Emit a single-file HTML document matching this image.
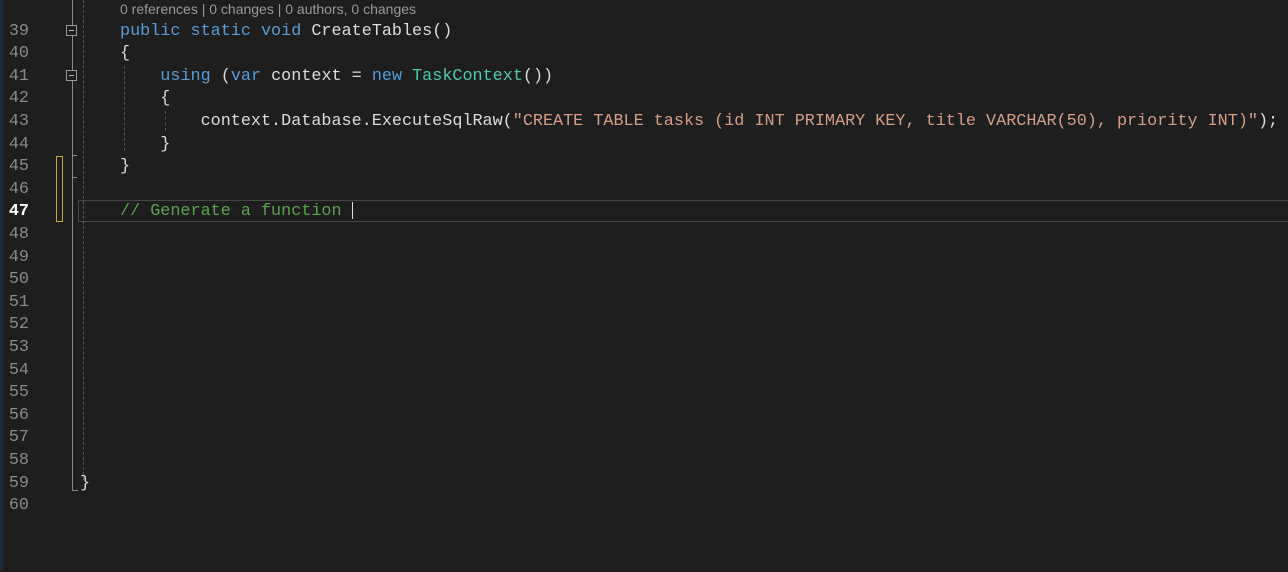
<!DOCTYPE html><html><head><style>
body{margin:0;width:1288px;height:570px;background:#1e1e1e;overflow:hidden;position:relative;font-family:"Liberation Mono",monospace;font-size:16.8px}
.w{position:absolute;left:0;top:1.5px;width:1288px;height:570px}
.ln{position:absolute;left:0;width:29px;text-align:right;color:#8a8a8a;height:22.6px;line-height:22.6px}
.c{position:absolute;left:120px;white-space:pre;color:#dcdcdc;height:22.6px;line-height:22.6px}
.k{color:#569cd6}.t{color:#4ec9b0}.s{color:#d69d85}.m{color:#57a64a}
.box{position:absolute;left:66px;width:9px;height:9px;border:1px solid #999;background:#1e1e1e}
.box:after{content:"";position:absolute;left:2px;top:4px;width:5px;height:1px;background:#bbb}
.dg{position:absolute;width:0;border-left:1px dashed #555}
</style></head><body>
<div style="position:absolute;left:0;top:0;width:3px;height:570px;background:#1b2a44"></div>
<div style="position:absolute;left:120px;top:0;font-family:'Liberation Sans',sans-serif;font-size:14px;color:#999;line-height:19px">0 references | 0 changes | 0 authors, 0 changes</div>
<div style="position:absolute;left:78px;top:200px;width:1210px;height:20px;border:1px solid #464646;border-right:none"></div>
<div style="position:absolute;left:56px;top:156px;width:5px;height:64px;border:1px solid #c8a83a"></div>
<div style="position:absolute;left:72px;top:0;width:1px;height:490px;background:#888"></div>
<div style="position:absolute;left:72px;top:490px;width:6px;height:1px;background:#888"></div>
<div style="position:absolute;left:72px;top:155px;width:5px;height:1px;background:#888"></div>
<div style="position:absolute;left:72px;top:177px;width:5px;height:1px;background:#888"></div>
<div class="dg" style="left:83px;top:0;height:480px"></div>
<div class="dg" style="left:124px;top:66px;height:85px"></div>
<div class="dg" style="left:165px;top:111px;height:20px"></div>
<div class="box" style="top:25px"></div><div class="box" style="top:70px"></div>
<div class="w">
<div class="ln" style="top:19px">39</div><div class="ln" style="top:41.6px">40</div><div class="ln" style="top:64.2px">41</div><div class="ln" style="top:86.8px">42</div><div class="ln" style="top:109.4px">43</div><div class="ln" style="top:132px">44</div><div class="ln" style="top:154.6px">45</div><div class="ln" style="top:177.2px">46</div><div class="ln" style="top:199.8px;color:#fff;font-weight:bold">47</div><div class="ln" style="top:222.4px">48</div><div class="ln" style="top:245px">49</div><div class="ln" style="top:267.6px">50</div><div class="ln" style="top:290.2px">51</div><div class="ln" style="top:312.8px">52</div><div class="ln" style="top:335.4px">53</div><div class="ln" style="top:358px">54</div><div class="ln" style="top:380.6px">55</div><div class="ln" style="top:403.2px">56</div><div class="ln" style="top:425.8px">57</div><div class="ln" style="top:448.4px">58</div><div class="ln" style="top:471px">59</div><div class="ln" style="top:493.6px">60</div>
<div class="c" style="top:19px"><span class="k">public static void</span> CreateTables()</div>
<div class="c" style="top:41.6px">{</div>
<div class="c" style="top:64.2px">    <span class="k">using</span> (<span class="k">var</span> context = <span class="k">new</span> <span class="t">TaskContext</span>())</div>
<div class="c" style="top:86.8px">    {</div>
<div class="c" style="top:109.4px">        context.Database.ExecuteSqlRaw(<span class="s">"CREATE TABLE tasks (id INT PRIMARY KEY, title VARCHAR(50), priority INT)"</span>);</div>
<div class="c" style="top:132px">    }</div>
<div class="c" style="top:154.6px">}</div>
<div class="c" style="top:199.8px"><span class="m">// Generate a function</span> <span style="display:inline-block;width:1px;height:17px;background:#ddd;vertical-align:middle"></span></div>
<div class="c" style="top:471px;left:80px">}</div>
</div>
</body></html>
